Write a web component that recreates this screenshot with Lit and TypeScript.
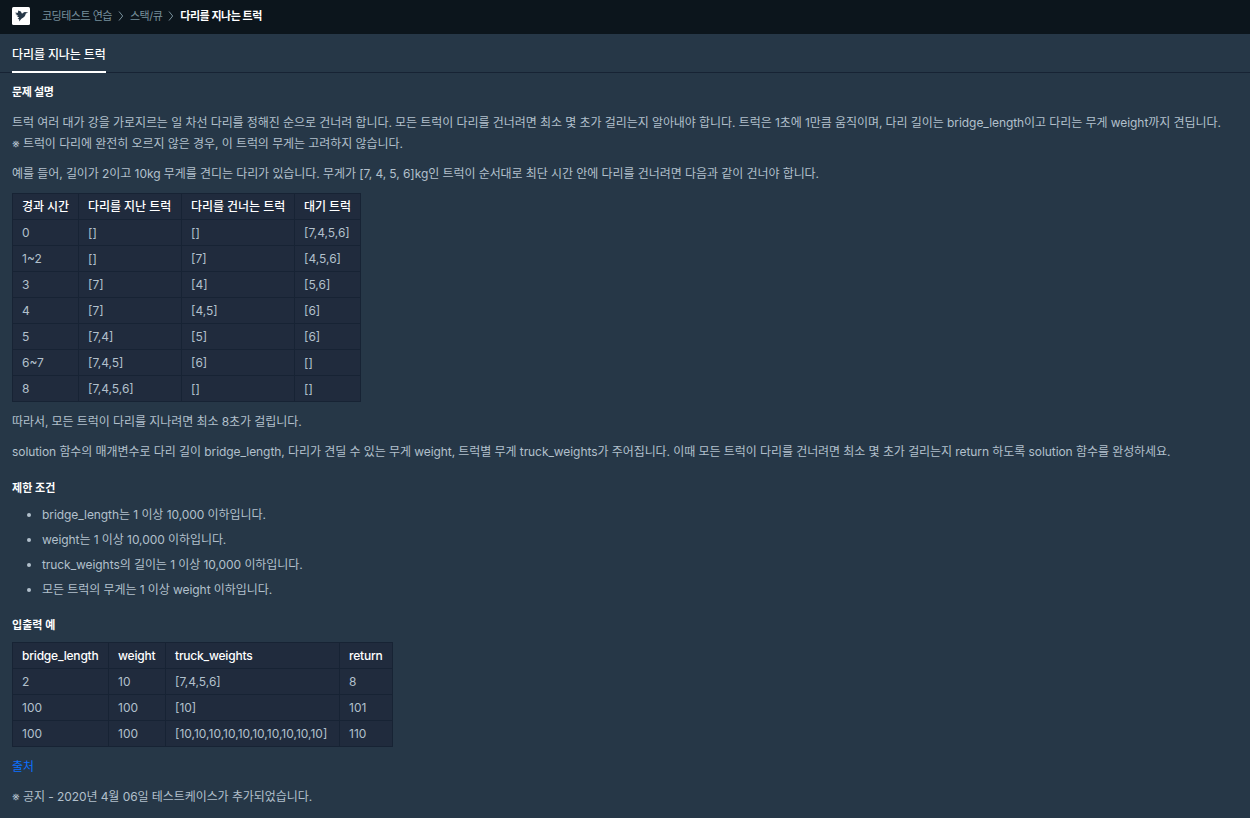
import { LitElement, html, css } from 'lit';
import { customElement, property } from 'lit/decorators.js';

@customElement('lesson-table')
class LessonTable extends LitElement {

  @property({ attribute: false })
  widths: number[] = [];

  @property({ attribute: false })
  head: string[] = [];

  @property({ attribute: false })
  rows: string[][] = [];

  render() {
    return html`
      <table style="width: ${this.widths.reduce((a, b) => a + b, 1)}px">
        <colgroup>
          ${this.widths.map((w) => html`<col style="width: ${w}px" />`)}
        </colgroup>
        <thead>
          <tr>${this.head.map((h) => html`<th>${h}</th>`)}</tr>
        </thead>
        <tbody>
          ${this.rows.map((row) => html`
            <tr>${row.map((cell) => html`<td>${cell}</td>`)}</tr>
          `)}
        </tbody>
      </table>
    `;
  }

  static get styles() {
    return css`
      :host {
        display: block;
        letter-spacing: 0;
      }
      table {
        table-layout: fixed;
        border-collapse: collapse;
        background-color: #202b3d;
        line-height: 21px;
      }
      th, td {
        box-sizing: border-box;
        height: 26px;
        padding: 2px 0 2px 9px;
        border: 1px solid #172334;
        text-align: left;
        white-space: nowrap;
        font-weight: 400;
      }
      th {
        color: #fff;
        font-weight: 500;
        letter-spacing: var(--head-spacing, -0.06px);
      }
    `;
  }
}

@customElement('app-root')
class AppRoot extends LitElement {

  private _chevron() {
    return html`
      <svg class="chevron" viewBox="0 0 6 10">
        <path d="M1 0.5 L4.7 5 L1 9.5"></path>
      </svg>
    `;
  }

  render() {
    return html`
      <header>
        <svg class="logo" viewBox="0 0 18 18">
          <rect width="18" height="18" rx="1.5" fill="#fff"></rect>
          <path
            fill="#263747"
            d="M6.2 3.6 L8.8 4.4 L10 6.7 L11.6 5.5 L12.9 5 L16.2 5.4 L13.8 6.6
               C13.4 9 11.8 10.8 9.4 11.8 L7.2 14.6 L7.2 12.2 L5.6 12 L7.2 10.4
               L5 9.4 L6.4 8.8 L3.4 7.8 L5.2 7.2 L2.8 5.7 L6 5.8 Z"
          ></path>
        </svg>
        <nav>
          <a>코딩테스트 연습</a>
          ${this._chevron()}
          <a>스택/큐</a>
          ${this._chevron()}
          <a class="current">다리를 지나는 트럭</a>
        </nav>
      </header>
      <div class="tabs"><span class="tab">다리를 지나는 트럭</span></div>
      <main>
        <h6 class="first">문제 설명</h6>
        <p>트럭 여러 대가 강을 가로지르는 일 차선 다리를 정해진 순으로 건너려 합니다. 모든 트럭이 다리를 건너려면 최소 몇 초가 걸리는지 알아내야 합니다. 트럭은 1초에 1만큼 움직이며, 다리 길이는 bridge_length이고 다리는 무게 weight까지 견딥니다.<br />※ 트럭이 다리에 완전히 오르지 않은 경우, 이 트럭의 무게는 고려하지 않습니다.</p>
        <p>예를 들어, 길이가 2이고 10kg 무게를 견디는 다리가 있습니다. 무게가 [7, 4, 5, 6]kg인 트럭이 순서대로 최단 시간 안에 다리를 건너려면 다음과 같이 건너야 합니다.</p>
        <lesson-table
          .widths=${[66, 103, 113, 66]}
          .head=${['경과 시간', '다리를 지난 트럭', '다리를 건너는 트럭', '대기 트럭']}
          .rows=${[
            ['0', '[]', '[]', '[7,4,5,6]'],
            ['1~2', '[]', '[7]', '[4,5,6]'],
            ['3', '[7]', '[4]', '[5,6]'],
            ['4', '[7]', '[4,5]', '[6]'],
            ['5', '[7,4]', '[5]', '[6]'],
            ['6~7', '[7,4,5]', '[6]', '[]'],
            ['8', '[7,4,5,6]', '[]', '[]'],
          ]}
        ></lesson-table>
        <p>따라서, 모든 트럭이 다리를 지나려면 최소 8초가 걸립니다.</p>
        <p>solution 함수의 매개변수로 다리 길이 bridge_length, 다리가 견딜 수 있는 무게 weight, 트럭별 무게 truck_weights가 주어집니다. 이때 모든 트럭이 다리를 건너려면 최소 몇 초가 걸리는지 return 하도록 solution 함수를 완성하세요.</p>
        <h6>제한 조건</h6>
        <ul>
          <li>bridge_length는 1 이상 10,000 이하입니다.</li>
          <li>weight는 1 이상 10,000 이하입니다.</li>
          <li>truck_weights의 길이는 1 이상 10,000 이하입니다.</li>
          <li>모든 트럭의 무게는 1 이상 weight 이하입니다.</li>
        </ul>
        <h6 class="examples">입출력 예</h6>
        <lesson-table
          class="io"
          .widths=${[96, 57, 174, 53]}
          .head=${['bridge_length', 'weight', 'truck_weights', 'return']}
          .rows=${[
            ['2', '10', '[7,4,5,6]', '8'],
            ['100', '100', '[10]', '101'],
            ['100', '100', '[10,10,10,10,10,10,10,10,10,10]', '110'],
          ]}
        ></lesson-table>
        <p><a class="link">출처</a></p>
        <p>※ 공지 - 2020년 4월 06일 테스트케이스가 추가되었습니다.</p>
      </main>
    `;
  }

  static get styles() {
    return css`
      :host {
        display: block;
        height: 818px;
        overflow: hidden;
        background-color: #263747;
        color: #b2c0cc;
        font-family: Inter, "Noto Sans CJK KR", sans-serif;
        font-size: 12px;
        line-height: 21px;
        letter-spacing: -0.07px;
      }
      header {
        display: flex;
        align-items: center;
        box-sizing: border-box;
        height: 34px;
        padding: 0 12px 2px;
        background-color: #0c151c;
      }
      .logo {
        width: 18px;
        height: 18px;
      }
      nav {
        display: flex;
        align-items: center;
        margin-left: 12px;
        color: #78909c;
        font-size: 11px;
        letter-spacing: -0.5px;
        white-space: nowrap;
      }
      .chevron {
        width: 6px;
        height: 10px;
        margin: 0 6px;
        fill: none;
        stroke: #78909c;
      }
      .current {
        color: #fff;
        font-weight: 700;
        letter-spacing: -0.45px;
      }
      .tabs {
        display: flex;
        box-sizing: border-box;
        height: 39px;
        padding: 0 12px;
        border-bottom: 1px solid #172334;
      }
      .tab {
        box-sizing: border-box;
        height: 39px;
        padding-top: 10px;
        border-bottom: 2px solid #fff;
        color: #fff;
        font-weight: 500;
        letter-spacing: -0.1px;
      }
      main {
        padding: 9px 12px 0;
      }
      h6 {
        margin: 16px 0 5px;
        color: #fff;
        font-size: 11px;
        font-weight: 700;
        line-height: 21px;
        letter-spacing: 0.05px;
      }
      h6.first {
        margin: 0 0 9px;
        letter-spacing: -0.3px;
      }
      h6.examples {
        margin: 15px 0 6px;
      }
      p {
        margin: 0 0 9px;
        white-space: nowrap;
      }
      lesson-table {
        margin-bottom: 9px;
      }
      .io {
        --head-spacing: -0.2px;
      }
      ul {
        margin: 0;
        padding-left: 30px;
      }
      li {
        margin-bottom: 4px;
      }
      .link {
        color: #0c70ff;
      }
    `;
  }
}
